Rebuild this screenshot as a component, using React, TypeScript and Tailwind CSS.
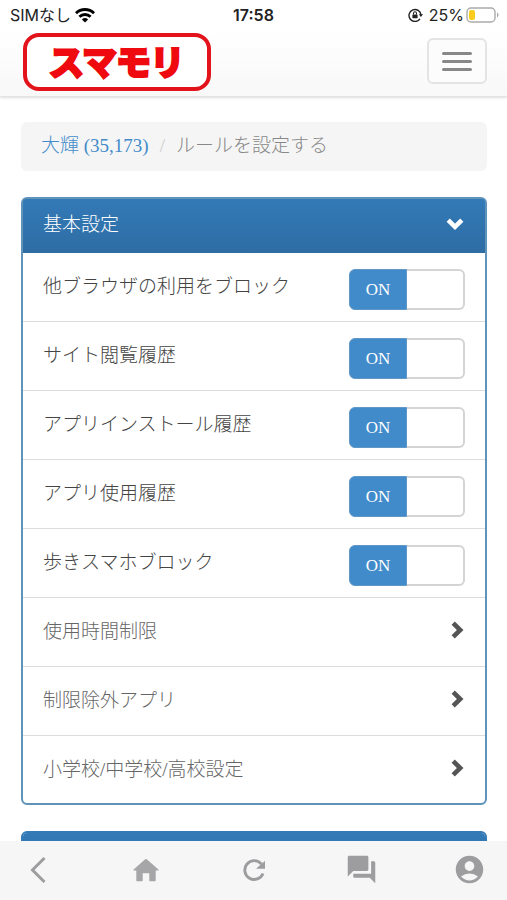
import { useState } from "react";
import type { ReactNode } from "react";
import { MdAccountCircle, MdForum } from "react-icons/md";

const toggles = [
  "他ブラウザの利用をブロック",
  "サイト閲覧履歴",
  "アプリインストール履歴",
  "アプリ使用履歴",
  "歩きスマホブロック",
];

const links = ["使用時間制限", "制限除外アプリ", "小学校/中学校/高校設定"];

function StatusBar() {
  return (
    <div className="grid h-[30px] grid-cols-3 items-center px-2 font-['Inter','Noto_Sans_CJK_JP',sans-serif] text-[16px] leading-[30px] font-normal text-[#222]">
      <div className="flex items-center gap-1 pl-0.5">
        <span className="whitespace-nowrap">SIMなし</span>
        <svg width="20" height="15" viewBox="0 0 20 15" fill="none" stroke="#000" strokeWidth="2.8" aria-hidden="true">
          <path d="M1 5.2a12.8 12.8 0 0 1 18 0" />
          <path d="M4.4 8.8a8 8 0 0 1 11.2 0" />
          <path d="M10 14.6 6.9 11.4a4.5 4.5 0 0 1 6.2 0Z" fill="#000" stroke="none" />
        </svg>
      </div>
      <span className="text-center font-semibold">17:58</span>
      <div className="flex items-center justify-end gap-0.5">
        <svg className="mr-1" width="15" height="14" viewBox="0 0 15 14" fill="none" stroke="#222" aria-hidden="true">
          <path d="M12 10.8A6 6 0 1 1 13 7" strokeWidth="1.4" />
          <path d="m10.8 6.2 4.2 0-2.1 2.8Z" fill="#222" stroke="none" />
          <rect x="4.4" y="6.4" width="5.2" height="3.8" rx=".6" fill="#222" stroke="none" />
          <path d="M5.5 6.6V5.3a1.5 1.5 0 0 1 3 0v1.3" strokeWidth="1.1" />
        </svg>
        <span>25%</span>
        <svg width="33" height="16" viewBox="0 0 33 16" aria-hidden="true">
          <rect x="1" y="1" width="28" height="14" rx="4" fill="#fff" stroke="#aaa" strokeWidth="1.4" />
          <rect x="3" y="3" width="6" height="10" rx="2" fill="#fbcb1e" />
          <path d="M31 5.6c2 .7 2 4 0 4.8Z" fill="#aaa" />
        </svg>
      </div>
    </div>
  );
}

function Header() {
  return (
    <header className="z-10 shrink-0 border-b border-[#e4e4e4] bg-linear-to-b from-white from-30% to-[#f8f8f8] shadow-sm">
      <StatusBar />
      <div className="flex h-[66px] items-start justify-between px-5 pt-[3px]">
        <a
          href="#top"
          className="ml-[3px] flex h-[58px] w-[188px] items-center justify-center rounded-2xl border-4 border-[#e3131b] bg-white pb-0.5 font-['Noto_Sans_CJK_JP',sans-serif] text-[34px] leading-[48px] font-medium text-[#ee0a0e] [-webkit-text-stroke:4px_#ee0a0e] [paint-order:stroke] [stroke-linejoin:round]"
        >
          スマモリ
        </a>
        <button
          type="button"
          aria-label="メニュー"
          className="mt-[5px] flex h-[46px] w-[60px] flex-col items-center justify-center gap-[5px] rounded-md border-2 border-[#e4e4e4] bg-[#fcfcfc]"
        >
          <span className="h-[3px] w-[30px] rounded-sm bg-[#888]" />
          <span className="h-[3px] w-[30px] rounded-sm bg-[#888]" />
          <span className="h-[3px] w-[30px] rounded-sm bg-[#888]" />
        </button>
      </div>
    </header>
  );
}

function ToggleRow({ label }: { label: string }) {
  const [on, setOn] = useState(true);
  return (
    <li className="h-[69px] border-b border-[#ddd]">
      <label className="flex h-full cursor-pointer items-start justify-between px-5 pt-4 text-[#444]">
        <span className="leading-[36px]">{label}</span>
        <input type="checkbox" role="switch" className="peer sr-only" checked={on} onChange={() => setOn(!on)} />
        <span className="flex h-[41px] w-[116px] rounded-md bg-white text-[17px] peer-focus-visible:outline-2">
          {on ? (
            <>
              <span className="flex flex-1 items-center justify-center rounded-l-md border border-[#5f97c6] bg-[#428bca] text-white">
                ON
              </span>
              <span className="flex-1 rounded-r-md border-2 border-l-0 border-[#d4d4d4]" />
            </>
          ) : (
            <>
              <span className="flex-1 rounded-l-md border-2 border-r-0 border-[#d4d4d4]" />
              <span className="flex flex-1 items-center justify-center rounded-r-md border-2 border-[#d4d4d4] bg-[#eee]">
                OFF
              </span>
            </>
          )}
        </span>
      </label>
    </li>
  );
}

function LinkRow({ label }: { label: string }) {
  return (
    <li className="h-[69px] border-b border-[#ddd] last:h-[67px] last:border-b-0">
      <a href="#detail" className="flex h-full items-start justify-between px-5 pt-4 text-[#666]">
        <span className="leading-[36px]">{label}</span>
        <svg className="mt-1.5" width="16" height="20" viewBox="0 0 16 20" fill="none" stroke="#555" strokeWidth="4.6" aria-hidden="true">
          <path d="m4.2 3.2 7 6.8-7 6.8" />
        </svg>
      </a>
    </li>
  );
}

function PanelHeading({ children }: { children: ReactNode }) {
  return (
    <button
      type="button"
      className="flex h-[54px] w-full items-center justify-between bg-linear-to-b from-[#337ab7] to-[#2e6da4] px-5 pb-0.5 text-white"
    >
      {children}
      <svg width="20" height="16" viewBox="0 0 20 16" fill="none" stroke="#fff" strokeWidth="4.6" aria-hidden="true">
        <path d="m3.2 3.2 6.8 6.6 6.8-6.6" />
      </svg>
    </button>
  );
}

function BottomNav() {
  const item = "flex h-10 w-9 items-center justify-center";
  return (
    <nav className="z-10 flex h-[59px] shrink-0 items-center justify-between bg-[#f6f6f6] px-5 pb-0.5 text-[#9d9da0]">
      <button type="button" aria-label="戻る" className={item}>
        <svg width="18" height="28" viewBox="0 0 18 28" fill="none" stroke="currentColor" strokeWidth="3" aria-hidden="true">
          <path d="M15.5 2 3.5 14l12 12" />
        </svg>
      </button>
      <button type="button" aria-label="ホーム" className={item}>
        <svg width="26" height="24" viewBox="0 0 26 24" fill="#a6a6a8" aria-hidden="true">
          <path d="M12.2 1.3a1.2 1.2 0 0 1 1.6 0L25.4 11.6c.4.4.2 1-.4 1h-2.3v9.6c0 .6-.4 1-1 1h-4.4c-.6 0-1-.4-1-1v-7h-6.6v7c0 .6-.4 1-1 1H4.3c-.6 0-1-.4-1-1v-9.6H1c-.6 0-.8-.6-.4-1Z" />
        </svg>
      </button>
      <button type="button" aria-label="更新" className={item}>
        <svg width="24" height="24" viewBox="0 0 24 24" fill="none" stroke="currentColor" aria-hidden="true">
          <path d="M21 15.4A9.4 9.4 0 1 1 19.4 6" strokeWidth="2.9" />
          <path d="M23 2.8v8h-9Z" fill="currentColor" stroke="none" />
        </svg>
      </button>
      <button type="button" aria-label="メッセージ" className={item}>
        <MdForum size={33} />
      </button>
      <button type="button" aria-label="アカウント" className={item}>
        <MdAccountCircle size={33} />
      </button>
    </nav>
  );
}

export default function App() {
  return (
    <div className="flex h-dvh flex-col bg-white font-['Liberation_Serif','Noto_Sans_CJK_JP',serif] text-[19px] font-light">
      <Header />
      <main className="flex-1 overflow-hidden pt-[25px] pr-5 pl-[21px]">
        <nav aria-label="パンくず" className="flex h-[49px] items-center rounded-md bg-[#f5f5f5] px-5">
          <a href="#user" className="text-[#428bca]">
            大輝 (35,173)
          </a>
          <span className="px-[11px] text-[#ccc]">/</span>
          <span className="text-[#888]">ルールを設定する</span>
        </nav>
        <section className="mt-[26px] overflow-hidden rounded-md border-2 border-[#5f93ba] bg-[#337ab7]">
          <PanelHeading>基本設定</PanelHeading>
          <ul className="bg-white">
            {toggles.map((label) => (
              <ToggleRow key={label} label={label} />
            ))}
            {links.map((label) => (
              <LinkRow key={label} label={label} />
            ))}
          </ul>
        </section>
        <section className="mt-[26px] overflow-hidden rounded-md border-2 border-[#337ab7]">
          <div className="h-[54px] bg-linear-to-b from-[#337ab7] to-[#2e6da4]" />
        </section>
      </main>
      <BottomNav />
    </div>
  );
}
